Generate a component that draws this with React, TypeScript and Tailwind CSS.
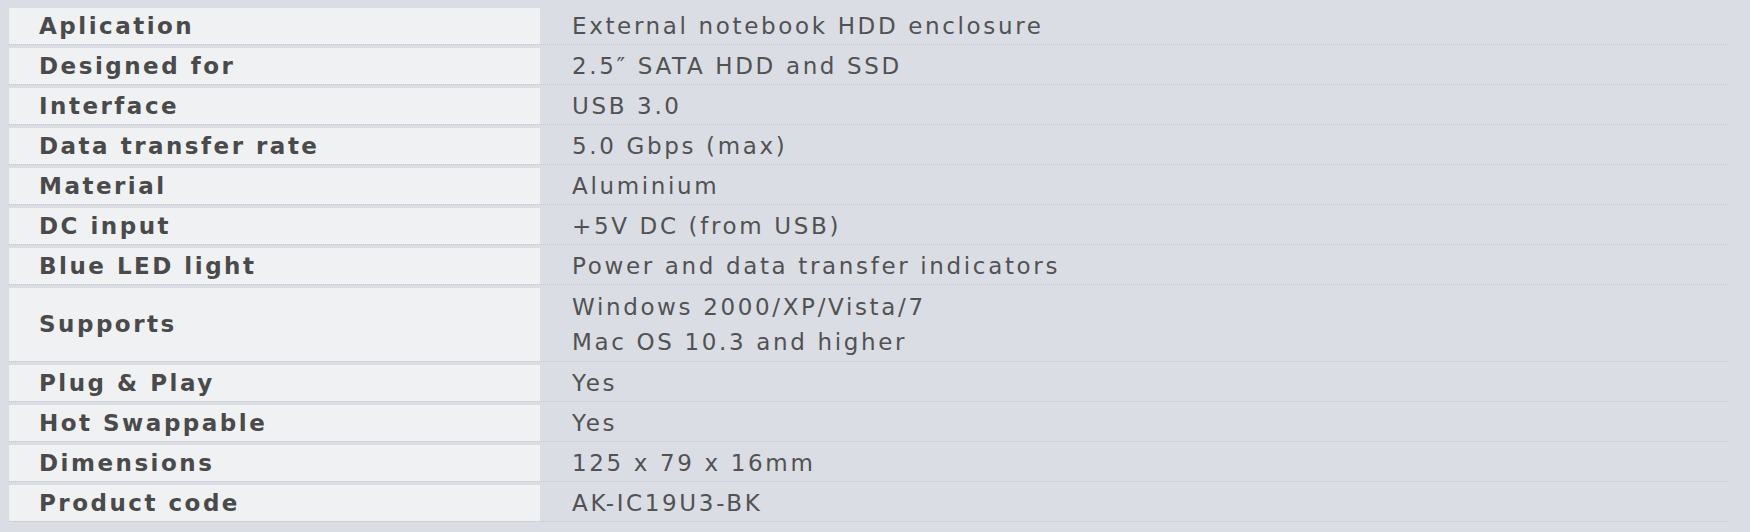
import React from 'react';

type SpecRow = {
  label: string;
  values: string[];
};

const specs: SpecRow[] = [
  { label: 'Aplication', values: ['External notebook HDD enclosure'] },
  { label: 'Designed for', values: ['2.5\u2033 SATA HDD and SSD'] },
  { label: 'Interface', values: ['USB 3.0'] },
  { label: 'Data transfer rate', values: ['5.0 Gbps (max)'] },
  { label: 'Material', values: ['Aluminium'] },
  { label: 'DC input', values: ['+5V DC (from USB)'] },
  { label: 'Blue LED light', values: ['Power and data transfer indicators'] },
  { label: 'Supports', values: ['Windows 2000/XP/Vista/7', 'Mac OS 10.3 and higher'] },
  { label: 'Plug & Play', values: ['Yes'] },
  { label: 'Hot Swappable', values: ['Yes'] },
  { label: 'Dimensions', values: ['125 x 79 x 16mm'] },
  { label: 'Product code', values: ['AK-IC19U3-BK'] },
];

export default function App() {
  return (
    <div className="min-h-[532px] w-[1750px] bg-[#dadde4] pt-[8px] pl-[9px] font-['DejaVu_Sans',Verdana,sans-serif] text-[23px] leading-[35px] tracking-[2.5px]">
      <div className="w-[1719px] flex flex-col gap-[3px]">
        {specs.map((row) => (
          <div key={row.label} className="flex border-b border-dotted border-[#c3c5c9]">
            <div className="w-[531px] shrink-0 bg-[#f0f1f3] pl-[30px] flex items-center min-h-[36px] font-bold text-[#4a4a4a]">
              {row.label}
            </div>
            <div
              className={
                row.values.length > 1
                  ? 'flex-1 pl-[32px] flex flex-col justify-center min-h-[36px] py-[1.5px] tracking-[2.65px] text-[#525252]'
                  : 'flex-1 pl-[32px] flex flex-col justify-center min-h-[36px] tracking-[2.65px] text-[#525252]'
              }
            >
              {row.values.map((v) => (
                <div key={v}>{v}</div>
              ))}
            </div>
          </div>
        ))}
      </div>
    </div>
  );
}
